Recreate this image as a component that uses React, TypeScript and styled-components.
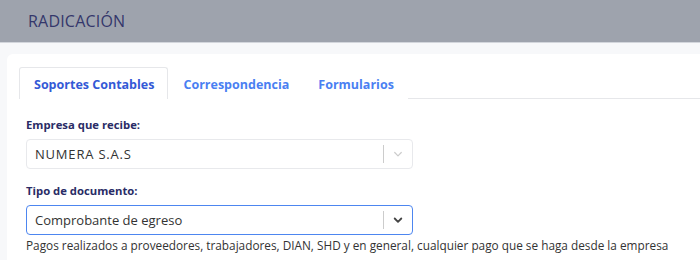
import styled, { createGlobalStyle } from 'styled-components';

const GlobalStyle = createGlobalStyle`
  body {
    margin: 0;
    background: #f7f8fa;
    font-family: "Open Sans", "Liberation Sans", sans-serif;
  }
`;

const tabs = ['Soportes Contables', 'Correspondencia', 'Formularios'];

function Chevron({ dark }: { dark?: boolean }) {
  return (
    <svg width="12" height="12" viewBox="0 0 20 20" aria-hidden>
      <path
        d="M4.5 7.5 L10 13 L15.5 7.5"
        fill="none"
        stroke={dark ? '#444' : '#ccc'}
        strokeWidth={dark ? 3 : 2}
        strokeLinecap="round"
        strokeLinejoin="round"
      />
    </svg>
  );
}

function App() {
  return (
    <>
      <GlobalStyle />
      <Header>
        <Title>RADICACIÓN</Title>
      </Header>
      <Main>
        <Card>
          <TabBar>
            {tabs.map((t, i) => (
              <Tab key={t} active={i === 0}>
                {t}
              </Tab>
            ))}
          </TabBar>
          <Form>
            <Field>
              <Label>Empresa que recibe:</Label>
              <Select>
                <Value wide>NUMERA S.A.S</Value>
                <Indicator>
                  <Chevron />
                </Indicator>
              </Select>
            </Field>
            <Field>
              <Label>Tipo de documento:</Label>
              <Select focused>
                <Value>Comprobante de egreso</Value>
                <Indicator>
                  <Chevron dark />
                </Indicator>
              </Select>
              <Help>
                Pagos realizados a proveedores, trabajadores, DIAN, SHD y en general, cualquier pago que se haga desde la empresa
              </Help>
            </Field>
          </Form>
        </Card>
      </Main>
    </>
  );
}

export default App;

const Header = styled.header`
  height: 42px;
  background: #9ea3ad;
  border-bottom: 1px solid #d3d6dc;
  display: flex;
  align-items: center;
  padding-left: 28px;
`;

const Title = styled.h1`
  margin: 0;
  font-size: 16px;
  font-weight: 400;
  color: #34376b;
  letter-spacing: 0.2px;
`;

const Main = styled.main`
  padding: 11px 0 0 7px;
`;

const Card = styled.section`
  background: #fff;
  border-radius: 6px 0 0 0;
  padding: 13px 0 0 12px;
  height: 193px;
`;

const TabBar = styled.nav`
  display: flex;
  border-bottom: 1px solid #e6e7ea;
  height: 31px;
`;

const Tab = styled.div<{ active?: boolean }>`
  display: flex;
  align-items: center;
  padding: 2px 13px 0 14px;
  font-size: 12.5px;
  font-weight: 700;
  color: ${({ active }) => (active ? '#3359d6' : '#4a7ff2')};
  border: 1px solid ${({ active }) => (active ? '#e6e7ea' : 'transparent')};
  border-bottom: none;
  border-radius: 3px 3px 0 0;
  background: #fff;
  margin-bottom: -1px;
  height: 32px;
  box-sizing: border-box;
`;

const Form = styled.div`
  display: flex;
  flex-direction: column;
  gap: 13px;
  padding: 17px 0 0 7px;
`;

const Field = styled.div`
  display: flex;
  flex-direction: column;
`;

const Label = styled.label`
  font-size: 11.3px;
  font-weight: 700;
  color: #2a2c66;
  margin-bottom: 6px;
  line-height: 17px;
`;

const Select = styled.div<{ focused?: boolean }>`
  width: 387px;
  height: 30px;
  box-sizing: border-box;
  display: flex;
  align-items: center;
  border: 1px solid ${({ focused }) => (focused ? '#4d86f0' : '#e8e9ec')};
  border-radius: 4px;
  background: #fff;
`;

const Value = styled.span<{ wide?: boolean }>`
  flex: 1;
  padding-left: 8px;
  font-size: 13px;
  color: #333;
  letter-spacing: ${({ wide }) => (wide ? '0.8px' : '0')};
`;

const Indicator = styled.span`
  display: flex;
  align-items: center;
  justify-content: center;
  width: 28px;
  height: 18px;
  border-left: 1px solid #ccc;
`;

const Help = styled.p`
  margin: 2px 0 0;
  font-size: 11.8px;
  color: #333;
  white-space: nowrap;
`;
